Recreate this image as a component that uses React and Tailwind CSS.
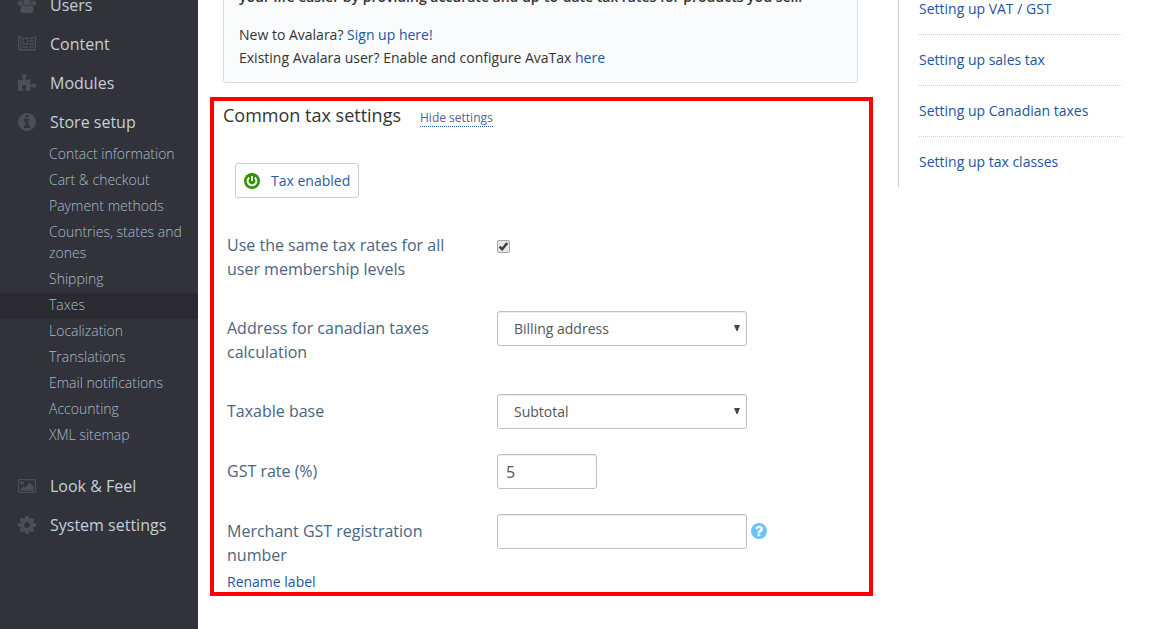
const ICONS = {
  users: {
    box: '64 0 1920 1792',
    size: 'w-[18px] h-[17px]',
    d: 'M657 896q-162 5-265 128h-134q-82 0-138-40.5t-56-118.5q0-353 124-353 6 0 43.5 21t97.5 42.5 119 21.5q67 0 133-23-5 37-5 66 0 139 81 256zm1071 637q0 120-73 189.5t-194 69.5h-874q-121 0-194-69.5t-73-189.5q0-53 3.5-103.5t14-109 26.5-108.5 43-97.5 62-81 85.5-53.5 111.5-20q10 0 43 21.5t73 48 107 48 135 21.5 135-21.5 107-48 73-48 43-21.5q61 0 111.5 20t85.5 53.5 62 81 43 97.5 26.5 108.5 14 109 3.5 103.5zm-1024-1277q0 106-75 181t-181 75-181-75-75-181 75-181 181-75 181 75 75 181zm704 384q0 159-112.5 271.5t-271.5 112.5-271.5-112.5-112.5-271.5 112.5-271.5 271.5-112.5 271.5 112.5 112.5 271.5zm576 225q0 78-56 118.5t-138 40.5h-134q-103-123-265-128 81-117 81-256 0-29-5-66 66 23 133 23 59 0 119-21.5t97.5-42.5 43.5-21q124 0 124 353zm-128-609q0 106-75 181t-181 75-181-75-75-181 75-181 181-75 181 75 75 181z',
  },
  content: {
    box: '0 256 2048 1408',
    size: 'w-[18px] h-[16px]',
    d: 'M1024 512h-384v384h384v-384zm128 640v128h-640v-128h640zm0-768v640h-640v-640h640zm640 768v128h-512v-128h512zm0-256v128h-512v-128h512zm0-256v128h-512v-128h512zm0-256v128h-512v-128h512zm-1536 960v-960h-128v960q0 26 19 45t45 19 45-19 19-45zm1664 0v-1088h-1536v1088q0 33-11 64h1483q26 0 45-19t19-45zm128-1216v1216q0 80-56 136t-136 56h-1664q-80 0-136-56t-56-136v-1088h256v-128h1792z',
  },
  puzzle: {
    box: '64 0 1664 1664',
    size: 'w-[18px] h-[18px]',
    d: 'M1728 1098q0 81-44.5 135t-123.5 54q-41 0-77.5-17.5t-59-38-56.5-38-71-17.5q-110 0-110 124 0 39 16 115t15 115v5q-22 0-33 1-34 3-97.5 11.5t-115.5 13.5-98 5q-61 0-103-26.5t-42-83.5q0-37 17.5-71t38-56.5 38-59 17.5-77.5q0-79-54-123.5t-135-44.5q-84 0-143 45.5t-59 127.5q0 43 15 83t33.5 64.5 33.5 53 15 50.5q0 45-46 89-37 35-117 35-95 0-245-24-9-2-27.5-4t-27.5-4l-13-2q-1 0-3-1-2 0-2-1v-1024q2 1 17.5 3.5t34 5 21.5 3.5q150 24 245 24 80 0 117-35 46-44 46-89 0-22-15-50.5t-33.5-53-33.5-64.5-15-83q0-82 59-127.5t144-45.5q80 0 134 44.5t54 123.5q0 41-17.5 77.5t-38 59-38 56.5-17.5 71q0 57 42 83.5t103 26.5q64 0 180-15t163-17v2q-1 2-3.5 17.5t-5 34-3.5 21.5q-24 150-24 245 0 80 35 117 44 46 89 46 22 0 50.5-15t53-33.5 64.5-33.5 83-15q82 0 127.5 59t45.5 143z',
  },
  info: {
    box: '128 128 1536 1536',
    size: 'w-[18px] h-[18px]',
    d: 'M1152 1376v-160q0-14-9-23t-23-9h-96v-512q0-14-9-23t-23-9h-320q-14 0-23 9t-9 23v160q0 14 9 23t23 9h96v320h-96q-14 0-23 9t-9 23v160q0 14 9 23t23 9h448q14 0 23-9t9-23zm-128-896v-160q0-14-9-23t-23-9h-192q-14 0-23 9t-9 23v160q0 14 9 23t23 9h192q14 0 23-9t9-23zm640 416q0 209-103 385.5t-279.5 279.5-385.5 103-385.5-103-279.5-279.5-103-385.5 103-385.5 279.5-279.5 385.5-103 385.5 103 279.5 279.5 103 385.5z',
  },
  picture: {
    box: '0 128 1920 1536',
    size: 'w-[18px] h-[14px]',
    d: 'M640 576q0 80-56 136t-136 56-136-56-56-136 56-136 136-56 136 56 56 136zm1024 384v448h-1408v-192l320-320 160 160 512-512zm96-704h-1600q-13 0-22.5 9.5t-9.5 22.5v1216q0 13 9.5 22.5t22.5 9.5h1600q13 0 22.5-9.5t9.5-22.5v-1216q0-13-9.5-22.5t-22.5-9.5zm160 32v1216q0 66-47 113t-113 47h-1600q-66 0-113-47t-47-113v-1216q0-66 47-113t113-47h1600q66 0 113 47t47 113z',
  },
  cog: {
    box: '128 128 1536 1536',
    size: 'w-[18px] h-[18px]',
    d: 'M1152 896q0-106-75-181t-181-75-181 75-75 181 75 181 181 75 181-75 75-181zm512-109v222q0 12-8 23t-20 13l-185 28q-19 54-39 91 35 50 107 138 10 12 10 25t-9 23q-27 37-99 108t-94 71q-12 0-26-9l-138-108q-44 23-91 38-16 136-29 186-7 28-36 28h-222q-14 0-24.5-8.5t-11.5-21.5l-28-184q-49-16-90-37l-141 107q-10 9-25 9-14 0-25-11-126-114-165-168-7-10-7-23 0-12 8-23 15-21 51-66.5t54-70.5q-27-50-41-99l-183-27q-13-2-21-12.5t-8-23.5v-222q0-12 8-23t19-13l186-28q14-46 39-92-40-57-107-138-10-12-10-24 0-10 9-23 26-36 98.5-107.5t94.5-71.5q13 0 26 10l138 107q44-23 91-38 16-136 29-186 7-28 36-28h222q14 0 24.5 8.5t11.5 21.5l28 184q49 16 90 37l142-107q9-9 24-9 13 0 25 10 129 119 165 170 7 8 7 22 0 12-8 23-15 21-51 66.5t-54 70.5q26 50 41 98l183 28q13 2 21 12.5t8 23.5z',
  },
  question: {
    box: '128 128 1536 1536',
    size: 'w-4 h-4',
    d: 'M1024 1376v-192q0-14-9-23t-23-9h-192q-14 0-23 9t-9 23v192q0 14 9 23t23 9h192q14 0 23-9t9-23zm256-672q0-88-55.5-163t-138.5-116-170-41q-243 0-371 213-15 24 8 42l132 100q7 6 19 6 16 0 25-12 53-68 86-92 34-24 86-24 48 0 85.5 26t37.5 59q0 38-20 61t-68 45q-63 28-115.5 86.5t-52.5 125.5v36q0 14 9 23t23 9h192q14 0 23-9t9-23q0-19 21.5-49.5t54.5-49.5q32-18 49-28.5t46-35 44.5-48 28-60.5 12.5-81zm384 192q0 209-103 385.5t-279.5 279.5-385.5 103-385.5-103-279.5-279.5-103-385.5 103-385.5 279.5-279.5 385.5-103 385.5 103 279.5 279.5 103 385.5z',
  },
};

function Icon({ name }) {
  const { box, size, d } = ICONS[name];
  return (
    <svg className={size} viewBox={box} preserveAspectRatio="none" fill="currentColor" aria-hidden="true">
      <path d={d} />
    </svg>
  );
}

function MenuItem({ icon, label }) {
  return (
    <div className="flex h-[39px] items-center gap-[14px] pl-[18px]">
      <span className="flex w-[18px] text-[#4b4e57]">
        <Icon name={icon} />
      </span>
      <span className="text-base leading-6 text-[#c3cfd9]">{label}</span>
    </div>
  );
}

const SUB_ITEMS = [
  'Contact information',
  'Cart & checkout',
  'Payment methods',
  'Countries, states and zones',
  'Shipping',
  'Taxes',
  'Localization',
  'Translations',
  'Email notifications',
  'Accounting',
  'XML sitemap',
];

function Sidebar() {
  return (
    <nav className="h-full w-[198px] shrink-0 bg-[#32323a]">
      <div className="-mt-[15px]">
        <MenuItem icon="users" label="Users" />
        <MenuItem icon="content" label="Content" />
        <MenuItem icon="puzzle" label="Modules" />
        <MenuItem icon="info" label="Store setup" />
      </div>
      <ul className="mt-px mb-[17px] text-sm leading-[21px] font-light text-[#a9bccb]">
        {SUB_ITEMS.map((label) => (
          <li
            key={label}
            className={label === 'Taxes' ? 'bg-[#2a2a30] pt-px pr-2.5 pb-1 pl-[49px]' : 'pt-px pr-2.5 pb-1 pl-[49px]'}
          >
            {label}
          </li>
        ))}
      </ul>
      <MenuItem icon="picture" label="Look & Feel" />
      <MenuItem icon="cog" label="System settings" />
    </nav>
  );
}

function SelectBox({ value }) {
  return (
    <div className="flex h-[35px] w-[250px] items-center justify-between rounded-[3px] border border-[#bfbfbf] pr-[6px] pl-4 text-sm text-[#555] shadow-[inset_0_1px_1px_rgba(0,0,0,0.075)]">
      <span>{value}</span>
      <svg className="mb-0.5 h-[6px] w-[6px]" viewBox="0 0 6 6" fill="#444" aria-hidden="true">
        <path d="M0 0h6L3.5 6h-1z" />
      </svg>
    </div>
  );
}

function Row({ label, className, children }) {
  return (
    <div className={`flex items-start ${className}`}>
      <div className="w-[270px] shrink-0 pt-[5px] pr-10 text-base leading-6 text-[#49657f]">{label}</div>
      {children}
    </div>
  );
}

const HELP_LINKS = ['Setting up VAT / GST', 'Setting up sales tax', 'Setting up Canadian taxes', 'Setting up tax classes'];

export default function App() {
  return (
    <div className="flex h-[629px] w-[1163px] overflow-hidden bg-white font-['Open_Sans',sans-serif] text-[#333]">
      <Sidebar />

      <main className="w-[675px] shrink-0 pl-3">
        <section className="-mt-5 ml-[13px] h-[103px] w-[635px] rounded-b-[3px] border border-[#d0dfeb] bg-[#fafbfd] pt-1 pl-[15px] text-sm leading-[23px]">
          <p className="font-semibold whitespace-nowrap">
            your life easier by providing accurate and up-to-date tax rates for products you sell.
          </p>
          <p className="mt-[15px]">
            New to Avalara? <a className="text-[#2354a0]">Sign up here!</a>
          </p>
          <p>
            Existing Avalara user? Enable and configure AvaTax <a className="text-[#2354a0]">here</a>
          </p>
        </section>

        <section className="mt-[14px] h-[499px] w-[663px] border-4 border-[#ff0000]">
          <div className="flex items-baseline gap-[19px] pt-px pl-[9px]">
            <h2 className="text-lg leading-[27px]">Common tax settings</h2>
            <a className="border-b border-dotted border-[#2354a0] text-xs leading-[16px] text-[#49659c]">Hide settings</a>
          </div>

          <button className="mt-[34px] ml-[21px] flex h-[35px] w-[124px] items-center gap-[11px] rounded-[3px] border border-[#ccc] pl-2 text-sm text-[#2a5aa5]">
            <svg className="h-4 w-4" viewBox="0 0 16 16" fill="none" aria-hidden="true">
              <circle cx="8" cy="8" r="8" fill="#2f9400" />
              <path d="M5.2 4.6a4.4 4.4 0 1 0 5.6 0" stroke="#fff" strokeWidth="1.9" />
              <path d="M8 3v5" stroke="#fff" strokeWidth="1.9" />
            </svg>
            <span>Tax enabled</span>
          </button>

          <div className="pl-[13px]">
            <Row className="mt-[30px] h-[83px]" label="Use the same tax rates for all user membership levels">
              <span className="mt-3 flex h-[13px] w-[13px] items-center justify-center rounded-[2px] border border-[#a6a6a6] bg-[#e6e6e6]">
                <svg className="h-[11px] w-[11px]" viewBox="0 0 11 11" fill="none" aria-hidden="true">
                  <path d="M1.6 5.6L4.2 8.2L9.2 2" stroke="#3c3c3c" strokeWidth="2.5" />
                </svg>
              </span>
            </Row>
            <Row className="h-[83px]" label="Address for canadian taxes calculation">
              <SelectBox value="Billing address" />
            </Row>
            <Row className="h-[60px]" label="Taxable base">
              <SelectBox value="Subtotal" />
            </Row>
            <Row className="h-[60px]" label="GST rate (%)">
              <div className="flex h-[35px] w-[100px] items-center rounded-[3px] border border-[#bfbfbf] pl-2 text-base text-[#555] shadow-[inset_0_1px_1px_rgba(0,0,0,0.075)]">
                5
              </div>
            </Row>
            <Row
              className=""
              label={
                <>
                  Merchant GST registration number
                  <a className="mt-1 block text-sm leading-[21px] text-[#2354a0]">Rename label</a>
                </>
              }
            >
              <div className="h-[35px] w-[250px] shrink-0 rounded-[3px] border border-[#bfbfbf] shadow-[inset_0_1px_1px_rgba(0,0,0,0.075)]" />
              <span className="mt-[9px] ml-1 text-[#6cc2fb]">
                <Icon name="question" />
              </span>
            </Row>
          </div>
        </section>
      </main>

      <aside className="ml-[25px] h-[187px] w-[224px] overflow-hidden border-l border-[#ccced1] pl-5">
        <ul className="-mt-4 text-sm leading-[21px] text-[#2354a0]">
          {HELP_LINKS.map((label) => (
            <li key={label} className="h-[51px] border-b border-dotted border-[#ccc] pt-[14px] last:border-b-0">
              {label}
            </li>
          ))}
        </ul>
      </aside>
    </div>
  );
}
